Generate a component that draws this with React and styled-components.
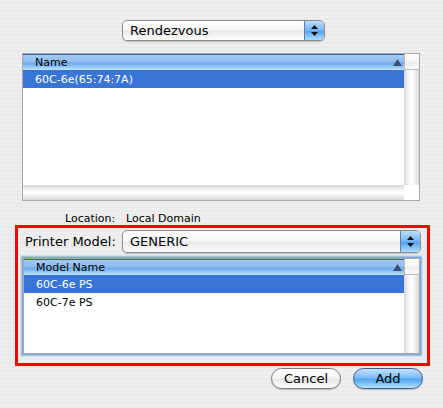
import React from "react";
import styled, { createGlobalStyle } from "styled-components";

const Global = createGlobalStyle`
  html, body { margin: 0; padding: 0; }
  body {
    font-family: "DejaVu Sans", "Liberation Sans", sans-serif;
    background: #ececec;
  }
`;

const Window = styled.div`
  width: 443px;
  height: 408px;
  box-sizing: border-box;
  padding-top: 20px;
  display: flex;
  flex-direction: column;
  background: repeating-linear-gradient(
    to bottom,
    #eeeeee 0px,
    #eeeeee 2px,
    #eaeaea 2px,
    #eaeaea 4px
  );
  overflow: hidden;
`;

const TopRow = styled.div`
  display: flex;
  padding-left: 122px;
`;

const Popup = styled.div`
  display: flex;
  width: ${(p) => p.$w}px;
  height: ${(p) => p.$h}px;
  box-sizing: border-box;
  border: 1px solid #8d8d8d;
  border-radius: 5px;
  overflow: hidden;
  background: linear-gradient(#ffffff, #f6f6f6 45%, #e9e9e9 55%, #fdfdfd);
  box-shadow: 0 1px 1px rgba(0, 0, 0, 0.18);
`;

const PopupLabel = styled.div`
  flex: 1;
  display: flex;
  align-items: center;
  padding-left: 7px;
  font-size: 13px;
  color: #000;
`;

const PopupArrows = styled.div`
  width: 19px;
  display: flex;
  align-items: center;
  justify-content: center;
  border-left: 1px solid #5d7fb5;
  background: linear-gradient(#b9dcfd, #7bb9f5 45%, #5aa3f1 55%, #a9dcfd);
`;

const Arrows = () => (
  <svg width="7" height="11" viewBox="0 0 7 11">
    <polygon points="3.5,0 7,4 0,4" fill="#111" />
    <polygon points="0,7 7,7 3.5,11" fill="#111" />
  </svg>
);

const Table = styled.div`
  display: grid;
  grid-template-columns: 1fr 15px;
  grid-template-rows: ${(p) => (p.$hscroll ? "16px 1fr 15px" : "16px 1fr")};
  width: ${(p) => p.$w}px;
  height: ${(p) => p.$h}px;
  box-sizing: border-box;
  border: 1px solid #a9a9a9;
  background: #fff;
  margin-left: ${(p) => p.$ml}px;
  margin-top: ${(p) => p.$mt}px;
  box-shadow: ${(p) =>
    p.$focus
      ? "0 0 0 1px #7ea6d8, 0 0 0 2px #a5c4ea, 0 0 0 3px #cfe0f4"
      : "none"};
`;

const Header = styled.div`
  display: flex;
  align-items: center;
  justify-content: space-between;
  padding: 0 2px 0 12px;
  font-size: 11px;
  color: #000;
  border-top: 1px solid #3160b3;
  box-sizing: border-box;
  background: linear-gradient(
    #a6c9f2,
    #8fbcef 45%,
    #6ea8ea 55%,
    #9ad0f8 85%,
    #c6e6fb
  );
`;

const HeaderCorner = styled.div`
  box-sizing: border-box;
  border-left: 1px solid #b9b9b9;
  border-bottom: 1px solid #b9b9b9;
  background: linear-gradient(#ffffff, #f4f4f4 50%, #e9e9e9 51%, #fafafa);
`;

const Body = styled.div`
  display: flex;
  flex-direction: column;
  background: #fff;
  overflow: hidden;
`;

const Row = styled.div`
  height: 18px;
  display: flex;
  align-items: center;
  padding-left: 12px;
  font-size: 11px;
  color: ${(p) => (p.$sel ? "#fff" : "#000")};
  background: ${(p) => (p.$sel ? "#3875d7" : "transparent")};
`;

const VTrack = styled.div`
  background: linear-gradient(
    to right,
    #d6d6d6,
    #f0f0f0 25%,
    #ffffff 50%,
    #eaeaea 80%,
    #d8d8d8
  );
`;

const HTrack = styled.div`
  background: linear-gradient(
    to bottom,
    #d6d6d6,
    #f0f0f0 25%,
    #ffffff 50%,
    #eaeaea 80%,
    #d8d8d8
  );
`;

const ScrollCorner = styled.div`
  background: #fff;
`;

const SortTriangle = () => (
  <svg width="9" height="7" viewBox="0 0 9 7">
    <polygon points="4.5,0 9,7 0,7" fill="#3c4e6e" />
  </svg>
);

const LocationRow = styled.div`
  display: flex;
  height: 13px;
  margin-top: 11px;
  padding-left: 65px;
  font-size: 11px;
  color: #000;
  line-height: 13px;
`;

const LocLabel = styled.span`
  width: 61px;
`;

const ModelBox = styled.div`
  margin-top: 0;
  margin-left: 15px;
  width: 415px;
  height: 141px;
  box-sizing: border-box;
  border: 3px solid #ff0000;
  padding: 2px 6px 0 5px;
  display: flex;
  flex-direction: column;
`;

const ModelRow = styled.div`
  display: flex;
  align-items: center;
`;

const FieldLabel = styled.div`
  width: 99px;
  padding-left: 2px;
  box-sizing: border-box;
  font-size: 13px;
  color: #000;
`;

const ButtonRow = styled.div`
  display: flex;
  justify-content: flex-end;
  gap: 12px;
  padding-right: 20px;
  margin-top: 2px;
`;

const PushButton = styled.button`
  width: 70px;
  height: 21px;
  box-sizing: border-box;
  border-radius: 11px;
  border: 1px solid ${(p) => (p.$default ? "#3d5a8c" : "#7a7a7a")};
  font-family: "DejaVu Sans", "Liberation Sans", sans-serif;
  font-size: 13px;
  color: #000;
  padding: 0;
  background: ${(p) =>
    p.$default
      ? "linear-gradient(#c0e2fd, #7ebef7 45%, #55a6f2 55%, #b1e4fd)"
      : "linear-gradient(#ffffff, #f6f6f6 45%, #e6e6e6 55%, #ffffff)"};
  box-shadow: 0 1px 1px rgba(0, 0, 0, 0.2);
`;

export default function App() {
  return (
    <>
      <Global />
      <Window>
        <TopRow>
          <Popup $w={203} $h={21}>
            <PopupLabel>Rendezvous</PopupLabel>
            <PopupArrows>
              <Arrows />
            </PopupArrows>
          </Popup>
        </TopRow>

        <Table $w={398} $h={148} $ml={22} $mt={12} $hscroll>
          <Header>
            <span>Name</span>
            <SortTriangle />
          </Header>
          <HeaderCorner />
          <Body>
            <Row $sel>60C-6e(65:74:7A)</Row>
          </Body>
          <VTrack />
          <HTrack />
          <ScrollCorner />
        </Table>

        <LocationRow>
          <LocLabel>Location:</LocLabel>
          <span>Local Domain</span>
        </LocationRow>

        <ModelBox>
          <ModelRow>
            <FieldLabel>Printer Model:</FieldLabel>
            <Popup $w={299} $h={23}>
              <PopupLabel>GENERIC</PopupLabel>
              <PopupArrows>
                <Arrows />
              </PopupArrows>
            </Popup>
          </ModelRow>
          <Table $w={397} $h={96} $ml={0} $mt={5} $focus>
            <Header>
              <span>Model Name</span>
              <SortTriangle />
            </Header>
            <HeaderCorner />
            <Body>
              <Row $sel>60C-6e PS</Row>
              <Row>60C-7e PS</Row>
            </Body>
            <VTrack />
          </Table>
        </ModelBox>

        <ButtonRow>
          <PushButton>Cancel</PushButton>
          <PushButton $default>Add</PushButton>
        </ButtonRow>
      </Window>
    </>
  );
}
